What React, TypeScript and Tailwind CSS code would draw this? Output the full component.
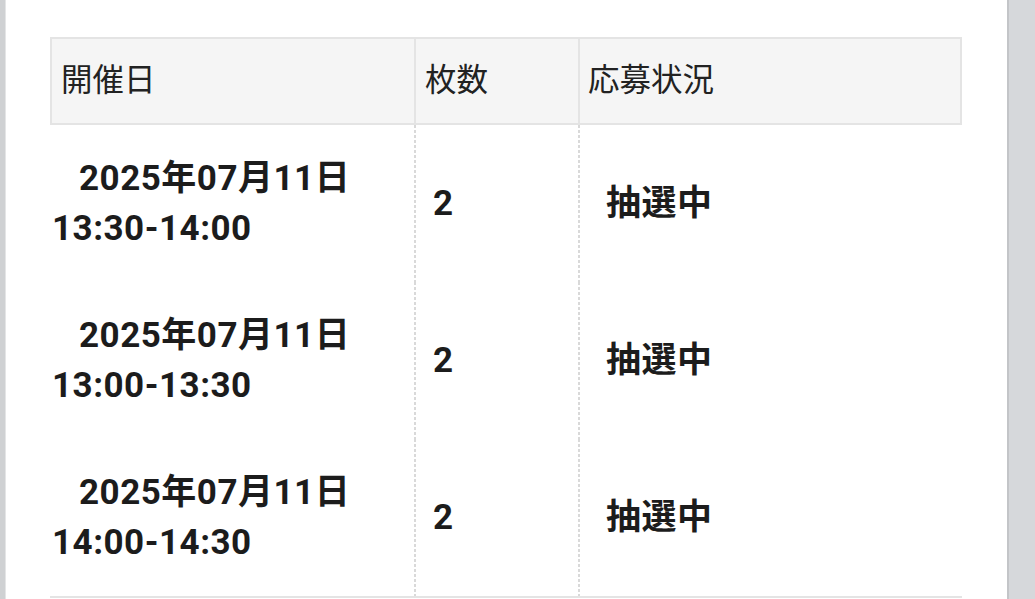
const rows = [
  { date: "2025年07月11日", time: "13:30-14:00", count: "2", status: "抽選中" },
  { date: "2025年07月11日", time: "13:00-13:30", count: "2", status: "抽選中" },
  { date: "2025年07月11日", time: "14:00-14:30", count: "2", status: "抽選中" },
];

const dash =
  "bg-[repeating-linear-gradient(to_bottom,#d9d9d9_0_3px,transparent_3px_5px)] bg-no-repeat bg-[length:2px_100%]";

export default function App() {
  return (
    <div className="flex h-[599px] w-[1035px] overflow-hidden font-['Roboto','Noto_Sans_CJK_JP',sans-serif] text-[#1c1c1c]">
      <div className="w-[6px] border-r border-[#e4e5e6] bg-[#cfd1d3]" />
      <div className="flex-1 bg-white pl-[44px] pt-[37px]">
        <div className="w-[912px]">
          {/* header */}
          <div className="grid h-[88px] grid-cols-[362px_164px_382px] border-2 border-[#e4e4e4] bg-[#f5f5f5] text-[31.5px] leading-none text-[#222]">
            <div className="flex items-center pl-[9px]">開催日</div>
            <div className="flex items-center border-l-2 border-[#e4e4e4] pl-[9px]">枚数</div>
            <div className="flex items-center border-l-2 border-[#e4e4e4] pl-[8px]">応募状況</div>
          </div>

          {/* body */}
          <div className="border-b-2 border-[#e4e4e4] px-[2px]">
            {rows.map((r, i) => (
              <div
                key={i}
                className="grid h-[157px] grid-cols-[362px_164px_382px] text-[35px] font-bold leading-[50px] tracking-[0.5px]"
              >
                <div className="flex items-center pt-[1px]">
                  <p className="indent-[27px]">
                    {r.date}
                    <br />
                    {r.time}
                  </p>
                </div>
                <div className={`flex items-center pl-[19px] ${dash}`}>{r.count}</div>
                <div className={`flex items-center pl-[28px] ${dash}`}>{r.status}</div>
              </div>
            ))}
          </div>
        </div>
      </div>
      <div className="w-[28px] border-l-2 border-[#c3c5c8] bg-[#d6d8db]" />
    </div>
  );
}
